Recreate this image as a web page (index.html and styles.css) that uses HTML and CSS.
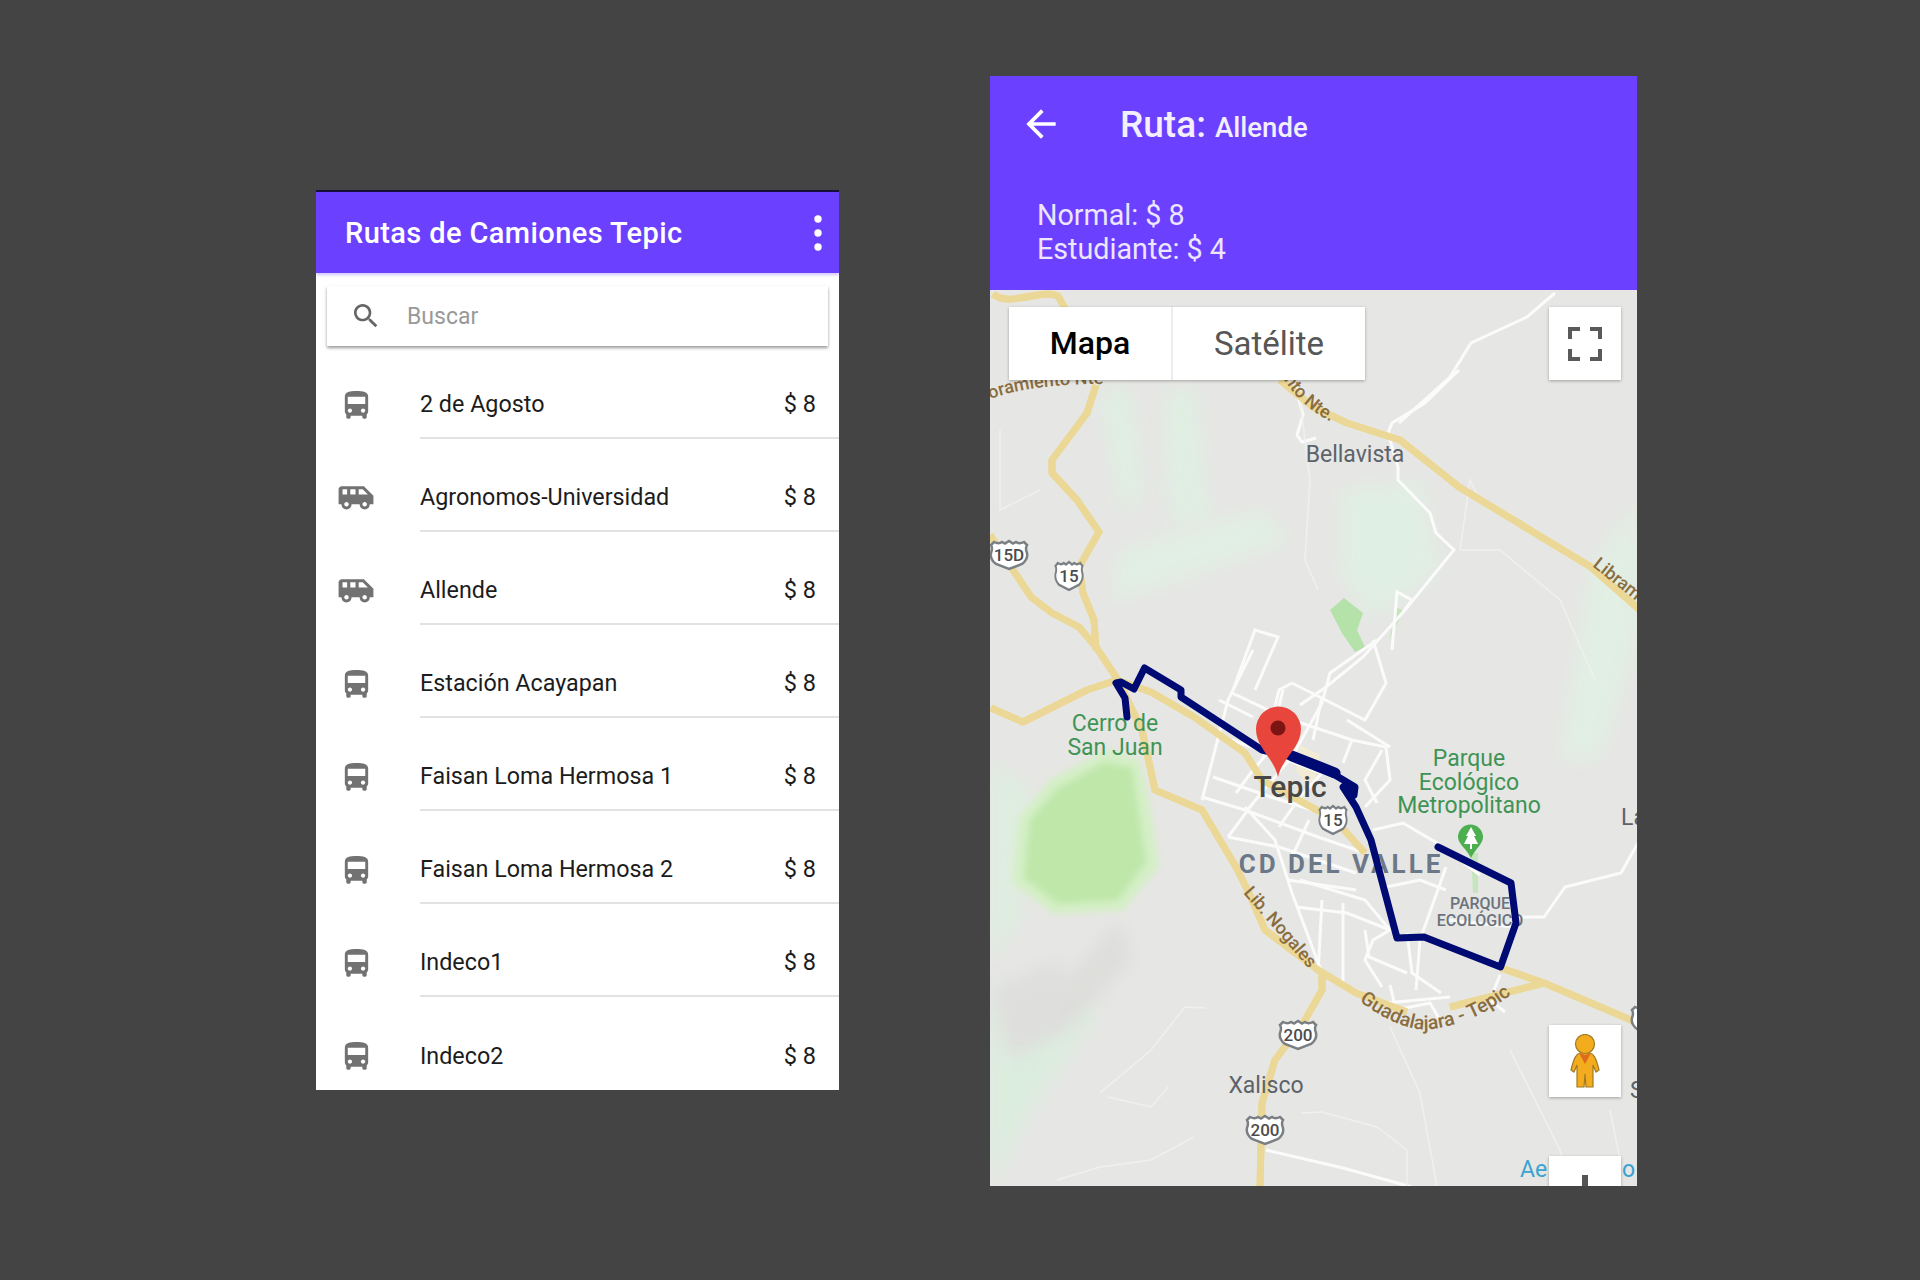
FILE: index.html
```html
<!DOCTYPE html>
<html>
<head>
    <title>Rutas de Camiones Tepic</title>
    <link rel="stylesheet" href="styles.css">
</head>
<body>
    <svg class="sprites" width="0" height="0">
        <defs>
            <symbol id="bus" viewBox="0 0 24 24"><path d="M4 16c0 .88.39 1.67 1 2.220V20c0 .55.45 1 1 1h1c.55 0 1-.45 1-1v-1h8v1c0 .55.45 1 1 1h1c.55 0 1-.45 1-1v-1.780c.61-.55 1-1.340 1-2.220V6c0-3.500-3.580-4-8-4s-8 .5-8 4v10zm3.500 1c-.83 0-1.500-.67-1.500-1.500S6.670 14 7.500 14s1.500.67 1.500 1.500S8.330 17 7.500 17zm9 0c-.83 0-1.500-.67-1.500-1.500s.67-1.500 1.500-1.500 1.500.67 1.500 1.500-.67 1.500-1.500 1.500zm1.500-6H6V6h12v5z"/></symbol>
            <symbol id="van" viewBox="0 0 24 24"><path fill-rule="evenodd" d="M17 4.500H3c-1.100 0-2 .89-2 2V16h1.800c0 1.900 1.400 3.200 3.200 3.200s3.200-1.300 3.200-3.200h5.100c0 1.900 1.400 3.200 3.200 3.200s3.200-1.300 3.200-3.200H23v-5.500zM3.500 9.800V6.500h2.900v3.300zM6 17.400c-.8 0-1.400-.6-1.400-1.400s.6-1.400 1.400-1.400 1.400.6 1.400 1.400-.6 1.400-1.400 1.400zM11.700 9.800H8.400V6.500h3.300zM17.500 17.400c-.8 0-1.400-.6-1.400-1.400s.6-1.400 1.400-1.400 1.400.6 1.400 1.400-.6 1.400-1.400 1.400zM13.700 9.800V6.500h2.500l3.300 3.300z"/></symbol>
            <symbol id="shield" viewBox="0 0 40 32" preserveAspectRatio="none"><path d="M5 3c3 1.500 6 1.500 8 0l3 1.500L20 2l4 2.500L27 3c2 1.500 5 1.500 8 0l3 3c-2 3-1 5 0 8 1 5-1 8-5 11l-13 5-13-5c-4-3-6-6-5-11 1-3 2-5 0-8z" fill="#fff" stroke="#7a7f84" stroke-width="2.500"/></symbol>
            <filter id="soft"><feGaussianBlur stdDeviation="9"/></filter>
            <filter id="park"><feGaussianBlur stdDeviation="3"/></filter>
            <filter id="edge"><feGaussianBlur stdDeviation="0.7"/></filter>
            <path id="guadalajara" d="M1359 1001 C1385 1020 1410 1032 1432 1029 C1460 1026 1490 1012 1514 992"/>
            <path id="nogales" d="M1243 893 L1316 977"/>
            <path id="libra" d="M1592 566 L1640 604"/>
            <path id="nte" d="M1279 371 C1290 390 1305 412 1346 429"/>
            <path id="oram" d="M990 399 C1020 388 1060 384 1100 384"/>
        </defs>
    </svg>

    <div class="stage">
        <section class="phone phone-list">
            <header class="bar">
                <h1 class="bar-title">Rutas de Camiones Tepic</h1>
                <svg class="dots" viewBox="0 0 10 36"><circle cx="5" cy="4" r="3.700"/><circle cx="5" cy="18" r="3.700"/><circle cx="5" cy="32" r="3.700"/></svg>
            </header>
            <div class="search">
                <svg class="search-icon" viewBox="0 0 24 24"><path d="M15.500 14h-.79l-.28-.27C15.410 12.590 16 11.110 16 9.500 16 5.910 13.090 3 9.500 3S3 5.910 3 9.500 5.910 16 9.500 16c1.610 0 3.090-.59 4.230-1.570l.27.28v.79l5 4.990L20.490 19l-4.990-5zm-6 0C7.010 14 5 11.990 5 9.500S7.010 5 9.500 5 14 7.010 14 9.500 11.990 14 9.500 14z"/></svg>
                <span class="search-text">Buscar</span>
            </div>
            <ul class="routes">
                <li class="route"><span class="route-icon"><svg class="bus"><use href="#bus"/></svg></span><div class="route-body"><span>2 de Agosto</span><span class="price">$ 8</span></div></li>
                <li class="route"><span class="route-icon"><svg class="van"><use href="#van"/></svg></span><div class="route-body"><span>Agronomos-Universidad</span><span class="price">$ 8</span></div></li>
                <li class="route"><span class="route-icon"><svg class="van"><use href="#van"/></svg></span><div class="route-body"><span>Allende</span><span class="price">$ 8</span></div></li>
                <li class="route"><span class="route-icon"><svg class="bus"><use href="#bus"/></svg></span><div class="route-body"><span>Estación Acayapan</span><span class="price">$ 8</span></div></li>
                <li class="route"><span class="route-icon"><svg class="bus"><use href="#bus"/></svg></span><div class="route-body"><span>Faisan Loma Hermosa 1</span><span class="price">$ 8</span></div></li>
                <li class="route"><span class="route-icon"><svg class="bus"><use href="#bus"/></svg></span><div class="route-body"><span>Faisan Loma Hermosa 2</span><span class="price">$ 8</span></div></li>
                <li class="route"><span class="route-icon"><svg class="bus"><use href="#bus"/></svg></span><div class="route-body"><span>Indeco1</span><span class="price">$ 8</span></div></li>
                <li class="route"><span class="route-icon"><svg class="bus"><use href="#bus"/></svg></span><div class="route-body"><span>Indeco2</span><span class="price">$ 8</span></div></li>
            </ul>
        </section>

        <section class="phone phone-map">
            <header class="detail">
                <div class="detail-top">
                    <svg class="back" viewBox="0 0 24 24"><path d="M20 11H7.830l5.590-5.590L12 4l-8 8 8 8 1.410-1.410L7.830 13H20v-2z"/></svg>
                    <div class="detail-title">Ruta: <span class="detail-name">Allende</span></div>
                </div>
                <div class="fares">
                    <div>Normal: $ 8</div>
                    <div>Estudiante: $ 4</div>
                </div>
            </header>
            <div class="map">
                <svg class="map-art" viewBox="990 290 647 897">
                    <rect x="990" y="290" width="647" height="897" fill="#e6e6e4"/>

                    <!-- terrain -->
                    <g filter="url(#soft)" opacity="0.75">
                        <path d="M1100 390 L1130 390 L1145 500 L1120 510z" fill="#def2e2"/>
                        <path d="M1165 390 L1195 390 L1210 520 L1170 520z" fill="#def2e2"/>
                        <path d="M1120 550 L1260 510 L1290 540 L1180 580 L1110 600z" fill="#e0f2e4"/>
                        <path d="M1340 490 L1420 480 L1440 570 L1370 620 L1340 570z" fill="#dff2e3"/>
                        <path d="M1590 570 L1637 500 L1637 640 L1600 760 L1560 760z" fill="#e0f2e4"/>
                        <path d="M990 760 L1030 790 L1020 920 L990 960z" fill="#dcf1de"/>
                        <path d="M990 980 L1060 1000 L1100 1010 L1030 1110 L990 1187z" fill="#d8f0dc"/>
                        <path d="M1050 1000 L1120 920 L1130 960 L1060 1040z" fill="#dadad8"/>
                        <path d="M990 990 L1060 960 L1070 1030 L1010 1060z" fill="#dcdcda"/>
                    </g>
                    <path d="M1019 817 L1051 779 L1108 749 L1140 760 L1149 800 L1159 867 L1123 911 L1053 914 L1012 882z" fill="#d4efc6" filter="url(#park)"/>
                    <path d="M1030 820 L1058 788 L1105 762 L1132 768 L1146 862 L1118 900 L1058 904 L1024 878z" fill="#bfe7aa" filter="url(#park)"/>
                    <path d="M1344 598 L1363 613 L1357 630 L1365 647 L1355 652 L1342 633 L1330 610z" fill="#b4e2a9" filter="url(#edge)"/>
                    <path d="M1397 608 L1389 640 L1404 610z" fill="#c5e6b8"/>
                    <path d="M1471 853 L1478 853 L1478 893 L1473 893z" fill="#c5e5bf" filter="url(#edge)"/>
                    <path d="M1300 745 L1320 755 L1312 790 L1296 770z" fill="#f2ecd4" filter="url(#edge)"/>

                    <!-- streets -->
                    <g class="streets" filter="url(#edge)">
                        <polyline points="1555,293 1527,317 1471,343 1450,377 1399,423"/>
                        <polyline points="1459,370 1425,403 1392,423 1388,433 1398,467 1398,480 1430,513 1436,533 1454,550 1405,610 1363,657 1326,687 1300,705"/>
                        <polyline points="1295,385 1303,415 1297,435 1302,442 1316,438"/>
                        <polyline points="1233,690 1255,630 1278,637 1255,690"/>
                        <polyline points="1392,650 1397,592 1412,600 1403,612"/>
                        <polyline points="1253,650 1228,700 1202,800"/>
                        <polyline points="1377,640 1330,673 1322,703 1292,757 1253,803 1228,837"/>
                        <polyline points="1232,693 1283,717 1352,740 1386,747 1390,780 1365,807"/>
                        <polyline points="1292,683 1365,720 1386,683 1373,640"/>
                        <polyline points="1283,690 1272,735 1262,760"/>
                        <polyline points="1202,797 1245,810 1318,837 1365,853"/>
                        <polyline points="1245,807 1275,840 1292,893 1322,973"/>
                        <polyline points="1228,837 1279,847 1356,873"/>
                        <polyline points="1300,880 1365,900 1390,930 1373,940 1365,960 1382,987"/>
                        <polyline points="1343,903 1343,983"/>
                        <polyline points="1322,900 1318,973"/>
                        <polyline points="1373,830 1403,823 1437,843 1480,875"/>
                        <polyline points="1386,887 1420,880 1446,890"/>
                        <polyline points="1446,867 1420,940 1416,990"/>
                        <polyline points="1514,917 1544,917 1565,887 1621,873 1638,843"/>
                        <polyline points="1446,920 1514,927"/>
                        <polyline points="1330,980 1386,1003 1450,997"/>
                        <polyline points="1390,985 1396,1010 1430,1003 1440,1020"/>
                        <polyline points="1500,975 1490,1000 1505,1012"/>
                        <polyline points="1266,1150 1343,1168 1412,1187"/>
                        <polyline points="1232,740 1322,773"/>
                        <polyline points="1213,777 1271,797 1322,813"/>
                        <polyline points="1236,793 1253,770 1279,740"/>
                        <polyline points="1279,827 1300,797 1322,773"/>
                        <polyline points="1309,820 1292,857"/>
                        <polyline points="1219,700 1253,717"/>
                        <polyline points="1292,683 1279,690 1271,723"/>
                        <polyline points="1322,697 1313,740"/>
                        <polyline points="1347,720 1390,747"/>
                        <polyline points="1352,740 1343,763"/>
                        <polyline points="1382,750 1365,780 1377,803"/>
                        <polyline points="1288,880 1356,890"/>
                        <polyline points="1296,907 1347,913 1390,930"/>
                        <polyline points="1365,930 1369,957 1407,973"/>
                        <polyline points="1407,933 1412,973 1441,993"/>
                    </g>
                    <g class="streets-thin" filter="url(#edge)">
                        <polyline points="1390,1027 1420,1093 1437,1187"/>
                        <polyline points="1301,1113 1322,1112 1377,1127 1407,1150 1407,1187"/>
                        <polyline points="1057,1180 1100,1167 1151,1160 1194,1137"/>
                        <polyline points="1100,1093 1151,1050 1185,1007 1206,1008"/>
                        <polyline points="1108,1097 1151,1107 1168,1087"/>
                        <polyline points="1300,400 1310,480 1305,560 1318,590"/>
                        <polyline points="1480,500 1470,480 1460,550 1500,550 1560,600 1595,680"/>
                        <polyline points="1000,430 1000,510 1040,490"/>
                        <polyline points="1510,1050 1560,1150 1570,1187"/>
                        <polyline points="1610,1110 1620,1160 1590,1187"/>
                    </g>

                    <!-- highways -->
                    <g class="road-edge" filter="url(#edge)">
                        <path id="r1" d="M993 294 C1010 308 1040 288 1058 296 L1066 310"/>
                        <path id="r2" d="M1096 385 L1087 413 L1052 460 L1052 473 L1077 500 L1099 532 L1079 567 L1083 593 L1094 620 L1096 650"/>
                        <path id="r3" d="M990 535 L1013 570 L1031 597 L1052 613 L1079 627 L1096 647 L1118 680 L1142 730 L1155 790 L1202 810 L1236 867 L1249 893 L1265 930 L1318 970 L1356 993 L1407 1012"/>
                        <path id="r4" d="M991 708 L1023 722 L1087 690 L1117 680 L1151 692 L1194 717 L1245 753 L1262 780 L1335 820 L1365 853"/>
                        <path id="r5" d="M1322 973 L1322 990 L1305 1020 L1275 1060 L1262 1103 L1260 1187"/>
                        <path id="r6" d="M1280 380 L1313 407 L1347 423 L1400 440 L1459 487 L1591 567 L1640 610"/>
                        <path id="r7" d="M1501 968 L1544 983 L1638 1023"/>
                        <path id="r8" d="M1544 983 L1450 1007"/>
                    </g>
                    <g class="road-fill" filter="url(#edge)">
                        <use href="#r1"/><use href="#r2"/><use href="#r3"/><use href="#r4"/><use href="#r5"/><use href="#r6"/><use href="#r7"/><use href="#r8"/>
                    </g>

                    <!-- road signs -->
                    <use href="#shield" x="989" y="539" width="40" height="32"/>
                    <text class="sign" x="1009" y="561">15D</text>
                    <use href="#shield" x="1054" y="560" width="30" height="32"/>
                    <text class="sign" x="1069" y="582">15</text>
                    <use href="#shield" x="1318" y="804" width="30" height="32"/>
                    <text class="sign" x="1333" y="826">15</text>
                    <use href="#shield" x="1278" y="1019" width="40" height="32"/>
                    <text class="sign" x="1298" y="1041">200</text>
                    <use href="#shield" x="1245" y="1114" width="40" height="32"/>
                    <text class="sign" x="1265" y="1136">200</text>
                    <use href="#shield" x="1630" y="1004" width="40" height="32"/>

                    <!-- labels -->
                    <text class="road-label"><textPath href="#oram">oramiento Nte</textPath></text>
                    <text class="road-label"><textPath href="#nte">ento Nte.</textPath></text>
                    <text class="road-label"><textPath href="#libra">Libram</textPath></text>
                    <text class="road-label"><textPath href="#nogales">Lib. Nogales</textPath></text>
                    <text class="road-label road-label-long"><textPath href="#guadalajara">Guadalajara - Tepic</textPath></text>

                    <text class="place" x="1355" y="462">Bellavista</text>
                    <text class="place" x="1266" y="1093">Xalisco</text>
                    <text class="place-left" x="1630" y="1098">S</text>
                    <text class="place-left" x="1621" y="825">La</text>
                    <text class="water" x="1520" y="1177">Ae</text>
                    <text class="water" x="1622" y="1177">o</text>

                    <text class="park" x="1115" y="731">Cerro de</text>
                    <text class="park" x="1115" y="755">San Juan</text>
                    <text class="park" x="1469" y="766">Parque</text>
                    <text class="park" x="1469" y="790">Ecológico</text>
                    <text class="park" x="1469" y="813">Metropolitano</text>

                    <text class="district" x="1341" y="873">CD DEL VALLE</text>
                    <text class="small-place" x="1480" y="909">PARQUE</text>
                    <text class="small-place" x="1480" y="926">ECOLÓGICO</text>

                    <path d="M1471 858 C1466 848 1458 844 1458 837 A12.500 12.500 0 0 1 1483 837 C1483 844 1476 848 1471 858z" fill="#4caf50"/>
                    <path d="M1471 827 L1476 836 L1474 836 L1478 844 L1472 844 L1472 849 L1470 849 L1470 844 L1464 844 L1468 836 L1466 836z" fill="#fff"/>

                    <!-- route -->
                    <polyline class="route-line" points="1127,717 1125,698 1116,683 1121,682 1134,689 1144.500,668 1181,690 1181,697 1262,750 1292,757 1335,775 1355,787 1354,795 1343,787 1356,807 1371,840 1397,938 1424,937 1500.500,967 1516,923 1511,883 1438,847"/>
                    <polyline class="route-line route-thick" points="1292,756 1335,773"/>

                    <text class="city" x="1290" y="797">Tepic</text>
                    <path d="M1278 777 C1274 758 1256 748 1256 729 A22.500 22.500 0 0 1 1301 729 C1301 748 1282 758 1278 777z" fill="#e8453c"/>
                    <circle cx="1278" cy="728" r="7.500" fill="#7d1414"/>
                </svg>

                <div class="map-type">
                    <div class="map-btn map-btn-on">Mapa</div>
                    <div class="map-btn">Satélite</div>
                </div>
                <div class="map-square map-full">
                    <svg class="full-icon" viewBox="0 0 34 34"><path d="M2 12V2h10M22 2h10v10M32 22v10H22M12 32H2V22"/></svg>
                </div>
                <div class="map-square map-peg">
                    <svg class="peg" viewBox="0 0 30 54">
                        <path d="M10 19 C6 20 4 24 1 36 L4 38 L7 31 L7 53 L14 53 L15 40 L16 53 L23 53 L23 31 L26 38 L29 36 C26 24 24 20 20 19z" fill="#f3ac1d" stroke="#a07a22" stroke-width="1.200"/>
                        <circle cx="15" cy="10" r="9.500" fill="#f3ac1d" stroke="#a07a22" stroke-width="1.200"/>
                        <path d="M9 19 L15 30 L21 19 L15 21z" fill="#de6a20"/>
                    </svg>
                </div>
                <div class="map-square map-zoom"><span class="plus-bar"></span></div>
            </div>
        </section>
    </div>
</body>
</html>
```

FILE: styles.css
```css
* {
    box-sizing: border-box;
}

body {
    margin: 0;
    background-color: #444444;
    font-family: Roboto, "Liberation Sans", sans-serif;
}

.sprites {
    position: absolute;
}

.stage {
    display: flex;
    align-items: flex-start;
    height: 1280px;
    padding-left: 316px;
    overflow: hidden;
}

.phone {
    display: flex;
    flex-direction: column;
    background-color: #fff;
    overflow: hidden;
}

.phone-list {
    width: 523px;
    height: 900px;
    margin-top: 190px;
}

.phone-map {
    width: 647px;
    height: 1110px;
    margin-top: 76px;
    margin-left: 151px;
}

/* list screen */
.bar {
    display: flex;
    align-items: center;
    justify-content: space-between;
    height: 83px;
    padding: 0 16px 0 29px;
    background-color: #6c40ff;
    border-top: 2px solid #14103a;
    box-shadow: 0 2px 3px rgba(108, 64, 255, 0.3);
}

.bar-title {
    margin: 0;
    font-size: 29px;
    font-weight: 500;
    letter-spacing: 0.4px;
    color: #fff;
}

.dots {
    width: 10px;
    height: 36px;
    fill: #fff;
}

.search {
    display: flex;
    align-items: center;
    height: 60px;
    margin: 13px 11px 0 11px;
    padding-left: 23px;
    background-color: #fff;
    box-shadow: 0 2px 3px rgba(0, 0, 0, 0.4);
}

.search-icon {
    width: 32px;
    height: 32px;
    fill: #666;
}

.search-text {
    margin-left: 25px;
    font-size: 23px;
    color: #999;
}

.routes {
    list-style: none;
    margin: 0;
    padding: 0;
}

.route {
    display: flex;
    height: 93px;
}

.route:last-child .route-body {
    border-bottom: none;
}

.route-icon {
    display: flex;
    align-items: center;
    justify-content: center;
    width: 104px;
    padding: 39px 24px 14px 0;
    fill: #727272;
}

.bus {
    flex: none;
    width: 35px;
    height: 35px;
}

.van {
    flex: none;
    width: 38px;
    height: 38px;
}

.route-body {
    display: flex;
    flex: 1;
    align-items: center;
    justify-content: space-between;
    padding: 25px 23px 0 0;
    font-size: 23.300px;
    color: #1c1c1c;
    border-bottom: 2px solid #e2e2e2;
}

.price {
    font-size: 23.500px;
}

/* detail screen */
.detail {
    flex: none;
    height: 214px;
    background-color: #6c40ff;
    color: #fff;
}

.detail-top {
    display: flex;
    align-items: center;
    height: 96px;
    padding-left: 29px;
}

.back {
    width: 44px;
    height: 44px;
    fill: #fff;
}

.detail-title {
    margin-left: 57px;
    font-size: 37px;
    font-weight: 500;
    color: #f3efff;
}

.detail-name {
    font-size: 27.500px;
}

.fares {
    padding: 26px 0 0 47px;
    font-size: 28.700px;
    line-height: 34px;
    color: #ece6ff;
}

.map {
    position: relative;
    flex: 1;
    overflow: hidden;
}

.map-art {
    display: block;
    width: 647px;
    height: 897px;
}

.streets polyline {
    fill: none;
    stroke: #fbfbfb;
    stroke-width: 3;
}

.streets-thin polyline {
    fill: none;
    stroke: #f0f0ef;
    stroke-width: 1.500;
}

.road-edge path {
    fill: none;
    stroke: #ecd896;
    stroke-width: 7;
    stroke-linejoin: round;
}

.road-fill {
    fill: none;
    stroke: #fbe08a;
    stroke-width: 4.500;
    stroke-linejoin: round;
}

.route-line {
    fill: none;
    stroke: #000a73;
    stroke-width: 7;
    stroke-linejoin: round;
    stroke-linecap: round;
}

.route-thick {
    stroke-width: 11;
}

.sign {
    font-size: 17px;
    font-weight: 500;
    fill: #4c4c4c;
    text-anchor: middle;
}

.road-label {
    font-size: 18px;
    font-weight: 500;
    fill: #8a6d3f;
}

.road-label-long {
    font-size: 19.500px;
}

.place {
    font-size: 23px;
    fill: #5c636b;
    text-anchor: middle;
}

.place-left {
    font-size: 23px;
    fill: #5c636b;
}

.water {
    font-size: 23px;
    fill: #3aa3d0;
}

.park {
    font-size: 23px;
    fill: #3f9455;
    text-anchor: middle;
}

.district {
    font-size: 26px;
    font-weight: 700;
    letter-spacing: 3px;
    fill: #6b7888;
    text-anchor: middle;
}

.small-place {
    font-size: 16px;
    font-weight: 500;
    fill: #6b737d;
    text-anchor: middle;
}

.city {
    font-size: 30px;
    font-weight: 500;
    fill: #474747;
    text-anchor: middle;
}

/* map controls */
.map-type {
    position: absolute;
    top: 17px;
    left: 19px;
    display: flex;
    height: 73px;
    background-color: #fff;
    box-shadow: 0 1px 3px rgba(0, 0, 0, 0.3);
}

.map-btn {
    display: flex;
    align-items: center;
    justify-content: center;
    width: 192px;
    padding-bottom: 1px;
    font-size: 33px;
    color: #565656;
}

.map-btn-on {
    width: 164px;
    font-size: 32px;
    font-weight: 500;
    color: #000;
    border-right: 2px solid #ececec;
}

.map-square {
    position: absolute;
    left: 559px;
    display: flex;
    align-items: center;
    justify-content: center;
    width: 72px;
    background-color: #fff;
    box-shadow: 0 1px 3px rgba(0, 0, 0, 0.3);
}

.map-full {
    top: 17px;
    height: 73px;
}

.map-peg {
    top: 735px;
    height: 72px;
}

.map-zoom {
    top: 866px;
    height: 72px;
    align-items: flex-start;
}

.plus-bar {
    width: 6px;
    height: 30px;
    margin-top: 19px;
    background-color: #555;
}

.full-icon {
    width: 34px;
    height: 34px;
    fill: none;
    stroke: #5a5a5a;
    stroke-width: 4;
}

.peg {
    width: 30px;
    height: 54px;
}
```
